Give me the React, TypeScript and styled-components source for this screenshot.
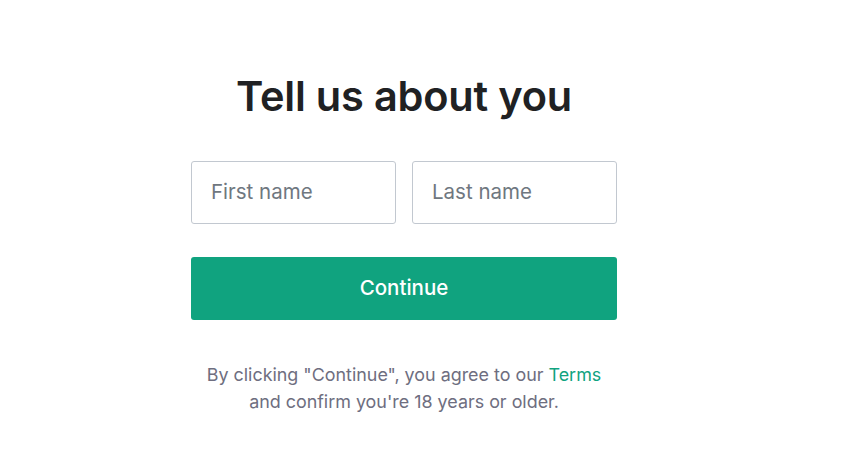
import React from "react";
import styled, { createGlobalStyle } from "styled-components";

const Global = createGlobalStyle`
  html, body { margin: 0; padding: 0; background: #ffffff; }
  body { font-family: Inter, "Noto Sans", sans-serif; }
`;

const Page = styled.main`
  width: 855px;
  height: 459px;
  box-sizing: border-box;
  padding: 69px 0 0 191px;
`;

const Card = styled.section`
  width: 426px;
  display: flex;
  flex-direction: column;
  align-items: stretch;
`;

const Title = styled.h1`
  margin: 0;
  text-align: center;
  font-size: 41.5px;
  line-height: 54px;
  font-weight: 600;
  color: #202123;
  letter-spacing: -0.2px;
`;

const NameRow = styled.div`
  display: grid;
  grid-template-columns: 1fr 1fr;
  gap: 16px;
  margin-top: 38px;
`;

const Field = styled.input`
  box-sizing: border-box;
  height: 63px;
  width: 100%;
  padding: 0 19px 2px;
  border: 1px solid #c2c8d0;
  border-radius: 3px;
  font-family: Inter, "Noto Sans", sans-serif;
  font-size: 20.5px;
  color: #2d333a;
  outline: none;
  &::placeholder { color: #6f7780; }
`;

const PrimaryButton = styled.button`
  margin-top: 33px;
  height: 63px;
  padding: 0 0 3px;
  border: none;
  border-radius: 3px;
  background: #10a37f;
  color: #ffffff;
  font-family: Inter, "Noto Sans", sans-serif;
  font-size: 20.5px;
  font-weight: 500;
  cursor: pointer;
`;

const Legal = styled.p`
  margin: 41px 0 0;
  text-align: center;
  font-size: 17.9px;
  line-height: 27px;
  color: #6e6e80;
`;

const TermsLink = styled.a`
  color: #10a37f;
  text-decoration: none;
`;

export default function App() {
  return (
    <>
      <Global />
      <Page>
        <Card>
          <Title>Tell us about you</Title>
          <NameRow>
            <Field placeholder="First name" />
            <Field placeholder="Last name" />
          </NameRow>
          <PrimaryButton>Continue</PrimaryButton>
          <Legal>
            By clicking "Continue", you agree to our <TermsLink href="#">Terms</TermsLink>
            <br />
            and confirm you're 18 years or older.
          </Legal>
        </Card>
      </Page>
    </>
  );
}
